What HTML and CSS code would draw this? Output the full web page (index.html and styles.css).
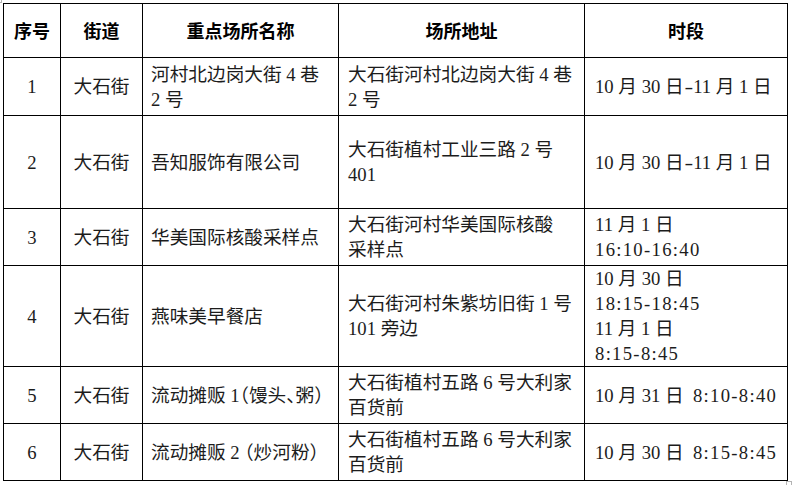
FILE: index.html
```html
<!DOCTYPE html>
<html lang="zh-CN">
<head>
<meta charset="utf-8">
<title>重点场所</title>
<link rel="stylesheet" href="styles.css">
</head>
<body>
<div class="page">
  <span class="mark mark-tl"></span>
  <span class="mark mark-br"></span>
  <table class="grid">
    <colgroup>
      <col class="c1"><col class="c2"><col class="c3"><col class="c4"><col class="c5">
    </colgroup>
    <thead>
      <tr class="r-head">
        <th>序号</th>
        <th>街道</th>
        <th>重点场所名称</th>
        <th>场所地址</th>
        <th>时段</th>
      </tr>
    </thead>
    <tbody>
      <tr class="r1">
        <td class="num">1</td>
        <td class="street">大石街</td>
        <td class="txt">河村北边岗大街 4 巷<br>2 号</td>
        <td class="txt">大石街河村北边岗大街 4 巷<br>2 号</td>
        <td class="txt">10 月 30 日<span class="dash">-</span>11 月 1 日</td>
      </tr>
      <tr class="r2">
        <td class="num">2</td>
        <td class="street">大石街</td>
        <td class="txt">吾知服饰有限公司</td>
        <td class="txt">大石街植村工业三路 2 号<br>401</td>
        <td class="txt">10 月 30 日<span class="dash">-</span>11 月 1 日</td>
      </tr>
      <tr class="r3">
        <td class="num">3</td>
        <td class="street">大石街</td>
        <td class="txt">华美国际核酸采样点</td>
        <td class="txt">大石街河村华美国际核酸<br>采样点</td>
        <td class="txt">11 月 1 日<br><span class="t">16:10-16:40</span></td>
      </tr>
      <tr class="r4">
        <td class="num">4</td>
        <td class="street">大石街</td>
        <td class="txt">燕味美早餐店</td>
        <td class="txt">大石街河村朱紫坊旧街 1 号<br>101 旁边</td>
        <td class="txt">10 月 30 日<br><span class="t">18:15-18:45</span><br>11 月 1 日<br><span class="t">8:15-8:45</span></td>
      </tr>
      <tr class="r5">
        <td class="num">5</td>
        <td class="street">大石街</td>
        <td class="txt nowrap">流动摊贩 1<span class="p">（</span>馒头<span class="p">、</span>粥<span class="p">）</span></td>
        <td class="txt">大石街植村五路 6 号大利家<br>百货前</td>
        <td class="txt nowrap">10 月 31 日&nbsp; <span class="t">8:10-8:40</span></td>
      </tr>
      <tr class="r6">
        <td class="num">6</td>
        <td class="street">大石街</td>
        <td class="txt nowrap">流动摊贩 2 <span class="p">（</span>炒河粉<span class="p">）</span></td>
        <td class="txt">大石街植村五路 6 号大利家<br>百货前</td>
        <td class="txt nowrap">10 月 30 日&nbsp; <span class="t">8:15-8:45</span></td>
      </tr>
    </tbody>
  </table>
</div>
</body>
</html>
```

FILE: styles.css
```css
html, body {
  margin: 0;
  padding: 0;
  background: #ffffff;
}

.page {
  position: relative;
  width: 792px;
  height: 485px;
  padding: 3px 0 0 3px;
  box-sizing: border-box;
}

.grid {
  border-collapse: collapse;
  table-layout: fixed;
  width: 784px;
  font-family: "Liberation Serif", "Noto Sans CJK SC", serif;
  font-size: 18.67px;
  line-height: 25px;
  color: #1c1c1c;
}

.c1 { width: 57px; }
.c2 { width: 82px; }
.c3 { width: 196px; }
.c4 { width: 246px; }
.c5 { width: 203px; }

.grid th,
.grid td {
  border: 1px solid #000;
  padding: 0;
  vertical-align: middle;
  overflow: hidden;
}

.grid th {
  font-family: "Noto Sans CJK SC", sans-serif;
  font-weight: 700;
  font-size: 18px;
  color: #000;
  text-align: center;
}

.r-head { height: 54px; }
.r1 { height: 58px; }
.r2 { height: 93px; }
.r3 { height: 57px; }
.r4 { height: 100px; }
.r5 { height: 57px; }
.r6 { height: 57px; }

.num,
.street {
  text-align: center;
}

.txt {
  text-align: left;
  padding-left: 8px !important;
}

.grid td.txt:nth-child(4) { padding-left: 9px !important; }
.grid td.txt:nth-child(5) { padding-left: 10px !important; }

.nowrap { white-space: nowrap; }

.p {
  font-feature-settings: "halt" 1;
}

.t {
  letter-spacing: 1.3px;
}

.dash {
  display: inline-block;
  width: 9.5px;
  text-align: center;
  transform: scaleX(1.4);
}

.mark {
  position: absolute;
  border-color: #b4b4b4;
  border-style: solid;
}

.mark-tl {
  left: 0;
  top: 0;
  width: 1px;
  height: 2px;
  border-width: 0 1px 1px 0;
}

.mark-br {
  left: 786px;
  top: 481px;
  width: 4px;
  height: 5px;
  border-width: 1px 1px 0 1px;
}
```
